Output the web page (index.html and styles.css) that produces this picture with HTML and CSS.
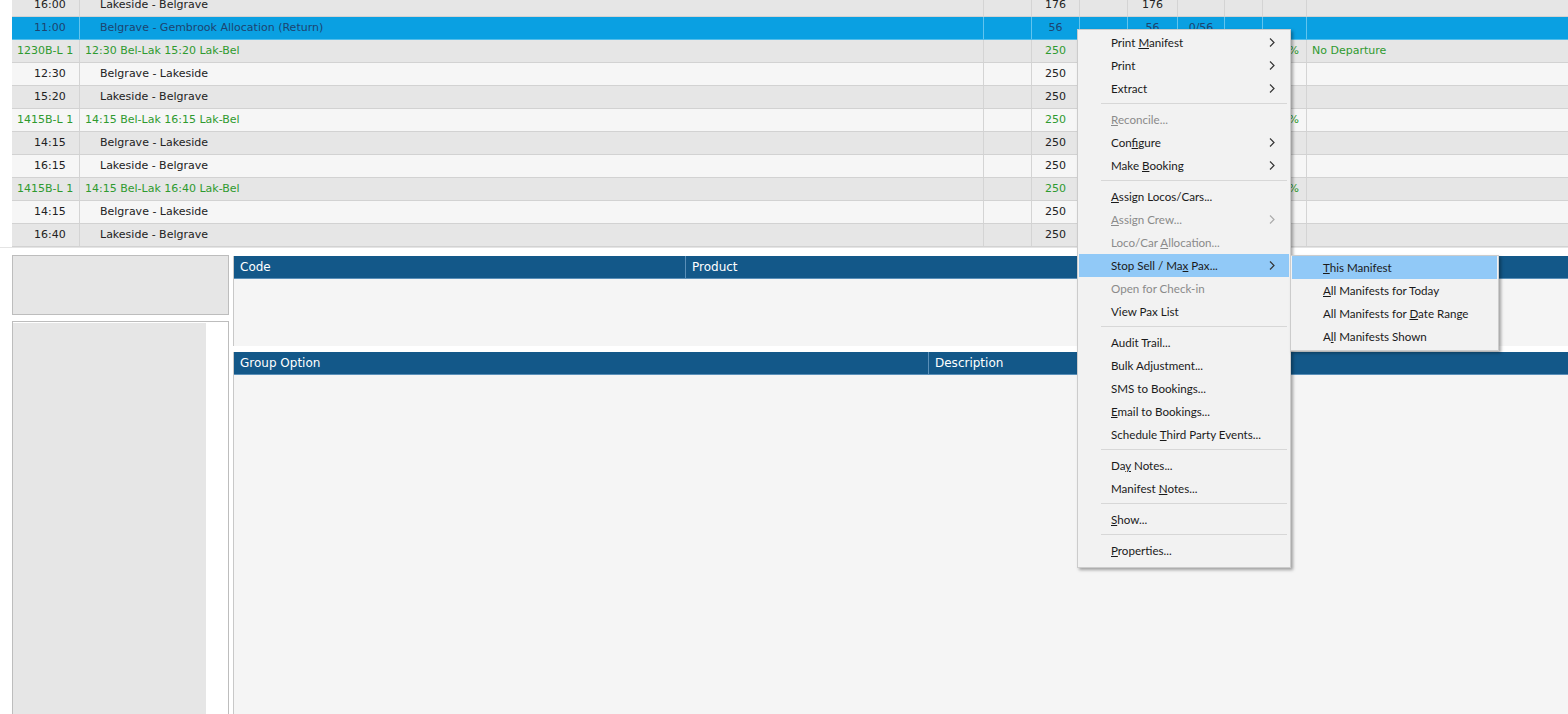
FILE: index.html
```html
<!DOCTYPE html>
<html>
<head>
<meta charset="utf-8">
<link rel="stylesheet" href="styles.css">
</head>
<body>
<div class="app">
  <div class="grid-wrap">
    <div class="grid">
      <div class="row even">
        <div class="c c1 time">16:00</div><div class="c c2 child">Lakeside - Belgrave</div><div class="c"></div><div class="c num">176</div><div class="c"></div><div class="c num">176</div><div class="c"></div><div class="c"></div><div class="c"></div><div class="c last"></div>
      </div>
      <div class="row sel">
        <div class="c c1 time">11:00</div><div class="c c2 child">Belgrave - Gembrook Allocation (Return)</div><div class="c"></div><div class="c num">56</div><div class="c"></div><div class="c num">56</div><div class="c num">0/56</div><div class="c"></div><div class="c"></div><div class="c last"></div>
      </div>
      <div class="row even green">
        <div class="c c1 code">1230B-L 1</div><div class="c c2">12:30 Bel-Lak 15:20 Lak-Bel</div><div class="c"></div><div class="c num">250</div><div class="c"></div><div class="c"></div><div class="c"></div><div class="c"></div><div class="c pct">0%</div><div class="c last">No Departure</div>
      </div>
      <div class="row odd">
        <div class="c c1 time">12:30</div><div class="c c2 child">Belgrave - Lakeside</div><div class="c"></div><div class="c num">250</div><div class="c"></div><div class="c"></div><div class="c"></div><div class="c"></div><div class="c"></div><div class="c last"></div>
      </div>
      <div class="row even">
        <div class="c c1 time">15:20</div><div class="c c2 child">Lakeside - Belgrave</div><div class="c"></div><div class="c num">250</div><div class="c"></div><div class="c"></div><div class="c"></div><div class="c"></div><div class="c"></div><div class="c last"></div>
      </div>
      <div class="row odd green">
        <div class="c c1 code">1415B-L 1</div><div class="c c2">14:15 Bel-Lak 16:15 Lak-Bel</div><div class="c"></div><div class="c num">250</div><div class="c"></div><div class="c"></div><div class="c"></div><div class="c"></div><div class="c pct">0%</div><div class="c last"></div>
      </div>
      <div class="row even">
        <div class="c c1 time">14:15</div><div class="c c2 child">Belgrave - Lakeside</div><div class="c"></div><div class="c num">250</div><div class="c"></div><div class="c"></div><div class="c"></div><div class="c"></div><div class="c"></div><div class="c last"></div>
      </div>
      <div class="row odd">
        <div class="c c1 time">16:15</div><div class="c c2 child">Lakeside - Belgrave</div><div class="c"></div><div class="c num">250</div><div class="c"></div><div class="c"></div><div class="c"></div><div class="c"></div><div class="c"></div><div class="c last"></div>
      </div>
      <div class="row even green">
        <div class="c c1 code">1415B-L 1</div><div class="c c2">14:15 Bel-Lak 16:40 Lak-Bel</div><div class="c"></div><div class="c num">250</div><div class="c"></div><div class="c"></div><div class="c"></div><div class="c"></div><div class="c pct">0%</div><div class="c last"></div>
      </div>
      <div class="row odd">
        <div class="c c1 time">14:15</div><div class="c c2 child">Belgrave - Lakeside</div><div class="c"></div><div class="c num">250</div><div class="c"></div><div class="c"></div><div class="c"></div><div class="c"></div><div class="c"></div><div class="c last"></div>
      </div>
      <div class="row even">
        <div class="c c1 time">16:40</div><div class="c c2 child">Lakeside - Belgrave</div><div class="c"></div><div class="c num">250</div><div class="c"></div><div class="c"></div><div class="c"></div><div class="c"></div><div class="c"></div><div class="c last"></div>
      </div>
    </div>
  </div>

  <div class="lower">
    <div class="side">
      <div class="side-top"></div>
      <div class="side-list"><div class="side-fill"></div><div class="side-strip"></div></div>
    </div>
    <div class="main">
      <div class="dg dg-top">
        <div class="dg-head"><div class="h h-code">Code</div><div class="h">Product</div></div>
        <div class="dg-body"></div>
      </div>
      <div class="dg dg-bottom">
        <div class="dg-head"><div class="h h-group">Group Option</div><div class="h">Description</div></div>
        <div class="dg-body"></div>
      </div>
    </div>
  </div>

  <div class="menu">
    <div class="mi">Print <u>M</u>anifest<span class="arr"><svg width="6" height="9" viewBox="0 0 6 9"><polyline points="1,0.5 5,4.5 1,8.5" fill="none" stroke="#333" stroke-width="1.2"/></svg></span></div>
    <div class="mi">Print<span class="arr"><svg width="6" height="9" viewBox="0 0 6 9"><polyline points="1,0.5 5,4.5 1,8.5" fill="none" stroke="#333" stroke-width="1.2"/></svg></span></div>
    <div class="mi">Extract<span class="arr"><svg width="6" height="9" viewBox="0 0 6 9"><polyline points="1,0.5 5,4.5 1,8.5" fill="none" stroke="#333" stroke-width="1.2"/></svg></span></div>
    <div class="sep"></div>
    <div class="mi dis"><u>R</u>econcile...</div>
    <div class="mi">Con<u>f</u>igure<span class="arr"><svg width="6" height="9" viewBox="0 0 6 9"><polyline points="1,0.5 5,4.5 1,8.5" fill="none" stroke="#333" stroke-width="1.2"/></svg></span></div>
    <div class="mi">Make <u>B</u>ooking<span class="arr"><svg width="6" height="9" viewBox="0 0 6 9"><polyline points="1,0.5 5,4.5 1,8.5" fill="none" stroke="#333" stroke-width="1.2"/></svg></span></div>
    <div class="sep"></div>
    <div class="mi"><u>A</u>ssign Locos/Cars...</div>
    <div class="mi dis"><u>A</u>ssign Crew...<span class="arr"><svg width="6" height="9" viewBox="0 0 6 9"><polyline points="1,0.5 5,4.5 1,8.5" fill="none" stroke="#aaa" stroke-width="1.2"/></svg></span></div>
    <div class="mi dis">Loco/Car <u>A</u>llocation...</div>
    <div class="mi hot">Stop Sell / Ma<u>x</u> Pax...<span class="arr"><svg width="6" height="9" viewBox="0 0 6 9"><polyline points="1,0.5 5,4.5 1,8.5" fill="none" stroke="#333" stroke-width="1.2"/></svg></span></div>
    <div class="mi dis">Open for Check-in</div>
    <div class="mi">View Pax List</div>
    <div class="sep"></div>
    <div class="mi">Audit Trail...</div>
    <div class="mi">Bulk Adjustment...</div>
    <div class="mi">SMS to Bookings...</div>
    <div class="mi"><u>E</u>mail to Bookings...</div>
    <div class="mi">Schedule <u>T</u>hird Party Events...</div>
    <div class="sep"></div>
    <div class="mi">Da<u>y</u> Notes...</div>
    <div class="mi">Manifest <u>N</u>otes...</div>
    <div class="sep"></div>
    <div class="mi"><u>S</u>how...</div>
    <div class="sep"></div>
    <div class="mi"><u>P</u>roperties...</div>
  </div>

  <div class="submenu">
    <div class="mi hot"><u>T</u>his Manifest</div>
    <div class="mi"><u>A</u>ll Manifests for Today</div>
    <div class="mi">All Manifests for <u>D</u>ate Range</div>
    <div class="mi">A<u>l</u>l Manifests Shown</div>
  </div>
</div>
</body>
</html>
```
FILE: styles.css
```css
* { box-sizing: border-box; }
html, body { margin: 0; padding: 0; background: #ffffff; }
body { width: 1568px; height: 714px; overflow: hidden; }

.app { position: relative; width: 1568px; height: 714px; overflow: hidden; }

/* ---------- top grid ---------- */
.grid-wrap { height: 248px; overflow: hidden; padding-left: 12px; border-bottom: 1px solid #e4e4e4; }
.grid { margin-top: -6px; font-family: "DejaVu Sans", Verdana, sans-serif; font-size: 11px; color: #222; }
.row {
  display: grid;
  grid-template-columns: 68px 904px 48px 48px 48px 50px 47px 38px 44px 1fr;
  height: 23px;
  border-bottom: 1px solid #d2d2d2;
}
.row.even { background: #e6e6e6; }
.row.odd { background: #f6f6f6; }
.row.sel { background: #0aa0e2; color: #1d4470; border-bottom-color: #53bdea; }
.row.green { color: #2f9a2f; }
.c {
  border-right: 1px solid #d4d4d4;
  line-height: 22px;
  white-space: nowrap;
  overflow: hidden;
}
.row.sel .c { border-right-color: #62c4ee; }
.c.last { border-right: none; padding-left: 5px; }
.time { padding-left: 22px; }
.code { padding-left: 5px; }
.c2 { padding-left: 5px; }
.c2.child { padding-left: 20px; }
.num { text-align: center; }
.pct { text-align: right; padding-right: 7px; }

/* ---------- lower area ---------- */
.lower { display: flex; gap: 4px; padding-left: 12px; margin-top: 7px; height: 460px; }
.side { width: 217px; display: flex; flex-direction: column; gap: 6px; }
.side-top { height: 60px; background: #e6e6e6; border: 1px solid #bdbdbd; }
.side-list { flex: 1; border: 1px solid #bdbdbd; border-bottom: none; display: flex; background: #fff; padding-top: 1px; }
.side-fill { width: 193px; background: #e6e6e6; }
.side-strip { flex: 1; background: #ffffff; }

.main { flex: 1; display: flex; flex-direction: column; gap: 6px; padding-top: 1px; }
.dg { border-left: 1px solid #c8c8c8; background: #f5f5f5; display: flex; flex-direction: column; }
.dg-top { height: 90px; }
.dg-bottom { flex: 1; }
.dg-head {
  display: flex;
  height: 23px;
  background: #135889;
  color: #ffffff;
  font-family: "DejaVu Sans", Tahoma, sans-serif;
  font-size: 12px;
  line-height: 22px;
  border-bottom: 1px solid #5a8fb8;
}
.h { padding-left: 6px; }
.h-code { width: 452px; border-right: 1px solid #5a8fb8; }
.h-group { width: 695px; border-right: 1px solid #5a8fb8; }
.dg-body { flex: 1; }

/* ---------- context menu ---------- */
.menu, .submenu {
  position: absolute;
  background: #f2f2f2;
  border: 1px solid #cccccc;
  box-shadow: 2px 2px 3px rgba(0,0,0,0.35);
  font-family: Lato, "Noto Sans", sans-serif;
  font-size: 11.6px;
  color: #1a1a1a;
  padding: 1px 1px 4px 1px;
}
.menu { left: 1077px; top: 29px; width: 214px; padding-bottom: 5px; }
.submenu { left: 1290px; top: 255px; width: 209px; padding: 0 1px 2px 1px; }
.mi {
  position: relative;
  height: 23px;
  line-height: 23px;
  padding-left: 32px;
  white-space: nowrap;
}
.submenu .mi { padding-left: 31px; }
.mi.dis { color: #8a8a8a; }
.mi.hot { background: #91c9f7; }
.mi u { text-underline-offset: 1px; text-decoration-thickness: 1px; }
.arr { position: absolute; right: 14px; top: 7px; height: 9px; line-height: 0; }
.sep { height: 1px; background: #d7d7d7; margin: 3px 2px 4px 22px; }
```
